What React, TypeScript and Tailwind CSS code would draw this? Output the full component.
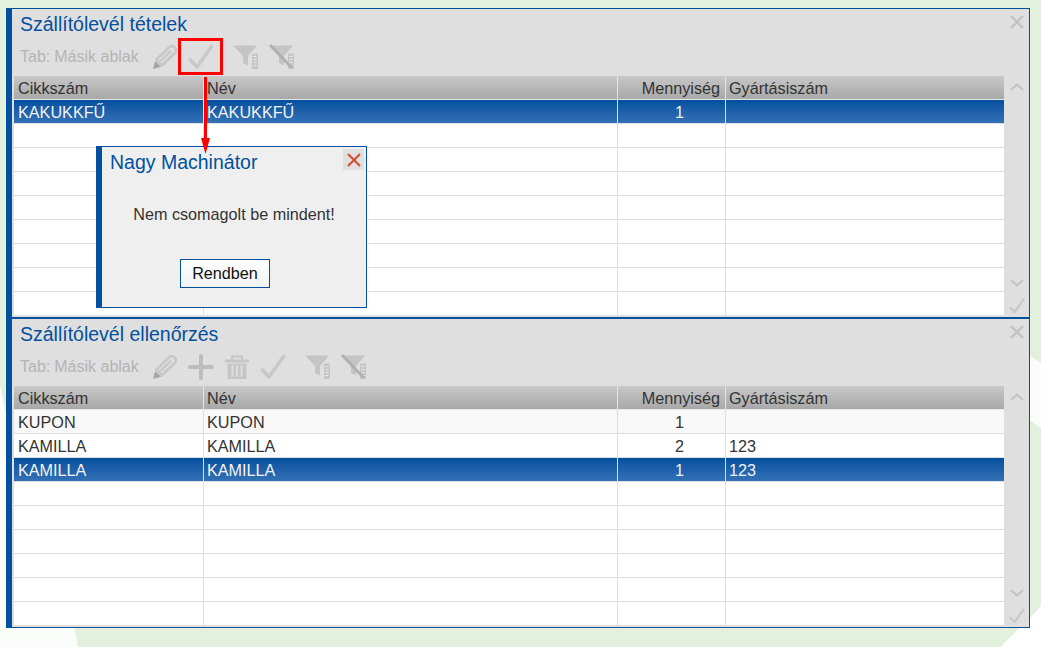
import React from 'react';

const FONT = "font-['Liberation_Sans',Arial,sans-serif]";

type Row = { code: string; name: string; qty: string; serial: string; selected?: boolean; tint?: boolean };

const Pencil = () => (
  <svg width="26" height="26" viewBox="0 0 26 26" fill="none">
    <path d="M1 25l2.2-8 5.8 5.8z" fill="#a6a6a6" />
    <path d="M4.5 15.5L17 3.2c1.8-1.6 3.6-1.6 5.6.2 1.9 2 1.9 3.8.3 5.6L10 21.5z" stroke="#c8c8c8" strokeWidth="2.6" />
    <path d="M8.5 17L19 6.5" stroke="#c8c8c8" strokeWidth="2.4" />
    <path d="M11 19.5L21.5 9" stroke="#c8c8c8" strokeWidth="1.6" />
  </svg>
);

const Check = ({ size = 26 }: { size?: number }) => (
  <svg width={size} height={size} viewBox="0 0 26 26" fill="none">
    <path d="M2.5 16l6.5 7L23.5 2.5" stroke="#c8c8c8" strokeWidth="3.6" strokeLinecap="round" strokeLinejoin="round" />
  </svg>
);

const Plus = () => (
  <svg width="26" height="26" viewBox="0 0 26 26" fill="none">
    <path d="M13 2v22M2 13h22" stroke="#bdbdbd" strokeWidth="4" strokeLinecap="round" />
  </svg>
);

const Trash = () => (
  <svg width="26" height="26" viewBox="0 0 26 26" fill="none">
    <path d="M1 7h24" stroke="#c6c6c6" strokeWidth="3" />
    <path d="M8 5.5V2.5h10v3" stroke="#c6c6c6" strokeWidth="2" />
    <path d="M3.5 9.5h19V25h-19z" fill="#c6c6c6" />
    <path d="M8.5 11.5v11M13 11.5v11M17.5 11.5v11" stroke="#dedede" strokeWidth="2" />
  </svg>
);

const Filter = ({ crossed }: { crossed?: boolean }) => (
  <svg width="26" height="26" viewBox="0 0 26 26" fill="none">
    <path d="M0 1.5h24l-9 10.5V21.5l-5-2.5v-7z" fill="#c4c4c4" />
    <path d="M19 9.5h6V25h-6z" fill="#c6c6c6" />
    <path d="M20.5 12.5h3M20.5 15.5h3M20.5 18.5h3M20.5 21.5h3" stroke="#e6e6e6" strokeWidth="1" />
    {crossed && <path d="M1 1l22 23" stroke="#b0b0b0" strokeWidth="2.8" />}
  </svg>
);

const Cross = ({ color = '#c2c2c2', size = 14, width = 2.4 }: { color?: string; size?: number; width?: number }) => (
  <svg width={size} height={size} viewBox="0 0 14 14" fill="none">
    <path d="M1 1l12 12M13 1L1 13" stroke={color} strokeWidth={width} />
  </svg>
);

const Chevron = ({ up }: { up?: boolean }) => (
  <svg width="14" height="8" viewBox="0 0 14 8" fill="none">
    <path d={up ? 'M1 7l6-5.5L13 7' : 'M1 1l6 5.5L13 1'} stroke="#c2c2c2" strokeWidth="2" />
  </svg>
);

const cell = 'flex items-center pb-[4px] border-r border-[#dedede] h-full';

const TableRow = ({ row }: { row: Row }) => {
  const bg = row.selected
    ? 'bg-linear-to-b from-[#03509e] to-[#3271b5] text-[#f2f2f2]'
    : row.tint
      ? 'bg-[#f8f8f8] text-[#333]'
      : 'bg-white text-[#333]';
  return (
    <div className={`grid grid-cols-[190px_414px_108px_1fr] h-6 shrink-0 text-[16.2px] border-b border-[#dedede] ${bg}`}>
      <div className={`${cell} pl-1`}>{row.code}</div>
      <div className={`${cell} pl-[3px]`}>{row.name}</div>
      <div className={`${cell} justify-center pl-[16px]`}>{row.qty}</div>
      <div className="flex items-center pb-[4px] pl-[3px]">{row.serial}</div>
    </div>
  );
};

const Panel = ({
  title,
  rows,
  tools,
  className,
}: {
  title: string;
  rows: Row[];
  tools: React.ReactNode;
  className?: string;
}) => (
  <div className={`relative flex bg-[#dfdfdf] ${className}`}>
    <div className="flex-1 min-w-0 pl-[2px]">
      <div className="pl-1.5 pt-[2px] h-[27px] text-[19.5px] leading-[26px] text-[#03509e]">{title}</div>
      <div className="flex items-center pl-1.5 pt-[2px] h-[40px] text-base text-[#b4b4b4]">
        <span className="mr-[4px]">Tab:</span>
        <span>Másik ablak</span>
        {tools}
      </div>
      <div className="grid grid-cols-[190px_414px_108px_1fr] h-[24px] text-[16.2px] text-[#333] bg-linear-to-b from-[#c8c8c8] to-[#a8a8a8] border-b border-[#e8e8e8]">
        <div className="flex items-center pb-[3px] pl-1 border-r border-[#e4e4e4]">Cikkszám</div>
        <div className="flex items-center pb-[3px] pl-[3px] border-r border-[#e4e4e4]">Név</div>
        <div className="flex items-center pb-[3px] justify-end pr-[5px] border-r border-[#e4e4e4]">Mennyiség</div>
        <div className="flex items-center pb-[3px] pl-[3px]">Gyártásiszám</div>
      </div>
      <div className="flex flex-col h-[215px] overflow-hidden bg-white">
        {rows.map((row, i) => (
          <TableRow key={i} row={row} />
        ))}
      </div>
    </div>
    <div className="w-[25px] shrink-0 flex flex-col items-center">
      <div className="h-[74px] pt-[6px] flex items-start">
        <Cross />
      </div>
      <div className="flex-1 flex flex-col items-center">
        <Chevron up />
        <div className="flex-1" />
        <Chevron />
        <div className="h-[11px]" />
        <Check size={16} />
        <div className="h-[3px]" />
      </div>
    </div>
  </div>
);

const blank = (n: number): Row[] => Array.from({ length: n }, () => ({ code: '', name: '', qty: '', serial: '' }));

const topRows: Row[] = [{ code: 'KAKUKKFŰ', name: 'KAKUKKFŰ', qty: '1', serial: '', selected: true }, ...blank(8)];

const bottomRows: Row[] = [
  { code: 'KUPON', name: 'KUPON', qty: '1', serial: '', tint: true },
  { code: 'KAMILLA', name: 'KAMILLA', qty: '2', serial: '123' },
  { code: 'KAMILLA', name: 'KAMILLA', qty: '1', serial: '123', selected: true },
  ...blank(6),
];

export default function App() {
  return (
    <div className={`relative w-[1041px] h-[647px] overflow-hidden bg-white ${FONT}`}>
      {/* background artwork */}
      <svg className="absolute inset-0" width="1041" height="647" viewBox="0 0 1041 647">
        <rect width="1041" height="647" fill="#fbfdfa" />
        <path d="M0 0h1041v363L1030 356 900 300 6 300 6 415 0 385z" fill="#e4f0de" />
        <path d="M1000 400L1041 428V606C1030 620 1012 634 1001 647H78L73 620H1000z" fill="#e4f0de" />
        <path d="M1001 647C1012 634 1030 620 1041 606V647z" fill="#ffffff" />
      </svg>

      <div className="relative pt-2 pl-1.5">
        <div className="w-[1024px] h-[620px] flex flex-col border-t border-r border-b border-[#03509e] border-l-[6px]">
          <Panel
            title="Szállítólevél tételek"
            rows={topRows}
            className="h-[310px] border-b-2 border-[#03509e]"
            tools={
              <div className="flex items-center ml-[13px] gap-[10px]">
                <Pencil />
                <Check />
                <div className="w-[26px] ml-[9px]">
                  <Filter />
                </div>
                <Filter crossed />
              </div>
            }
          />
          <Panel
            title="Szállítólevél ellenőrzés"
            rows={bottomRows}
            className="flex-1"
            tools={
              <div className="flex items-center ml-[13px] gap-[10px]">
                <Pencil />
                <Plus />
                <Trash />
                <Check />
                <div className="w-[26px] ml-[9px]">
                  <Filter />
                </div>
                <Filter crossed />
              </div>
            }
          />
        </div>
      </div>

      {/* red annotation over the toolbar */}
      <div className="absolute left-[178px] top-[38px] w-[45px] h-[37px] border-[3px] border-[#ff0000]" />

      {/* message dialog */}
      <div className="absolute left-[96px] top-[146px] w-[271px] h-[162px] bg-[#efefef] border border-[#03509e] border-l-[6px]">
        <div className="pl-2 pt-[2px] text-[19.5px] leading-[26px] text-[#03509e]">Nagy Machinátor</div>
        <div className="absolute right-[2px] top-[2px] w-[21px] h-[21px] bg-[#e0e0e0] flex items-center justify-center">
          <Cross color="#d0523a" size={14} width={2.2} />
        </div>
        <div className="mt-[29px] text-center text-[16.2px] leading-5 text-[#333]">Nem csomagolt be mindent!</div>
        <div className="mt-[35px] flex justify-center pr-[18px]">
          <button className="w-[90px] h-[29px] border border-[#03509e] bg-linear-to-b from-white to-[#f2f2f2] text-[16.2px] text-[#111]">
            Rendben
          </button>
        </div>
      </div>

      {/* arrow points into the dialog */}
      <div className="absolute left-[204px] top-[77px] w-[3px] h-[62px] bg-[#ff0000]" />
      <svg className="absolute left-[201px] top-[138px]" width="9" height="16" viewBox="0 0 9 16">
        <path d="M0 0h9L4.5 16z" fill="#ff0000" />
      </svg>
    </div>
  );
}
